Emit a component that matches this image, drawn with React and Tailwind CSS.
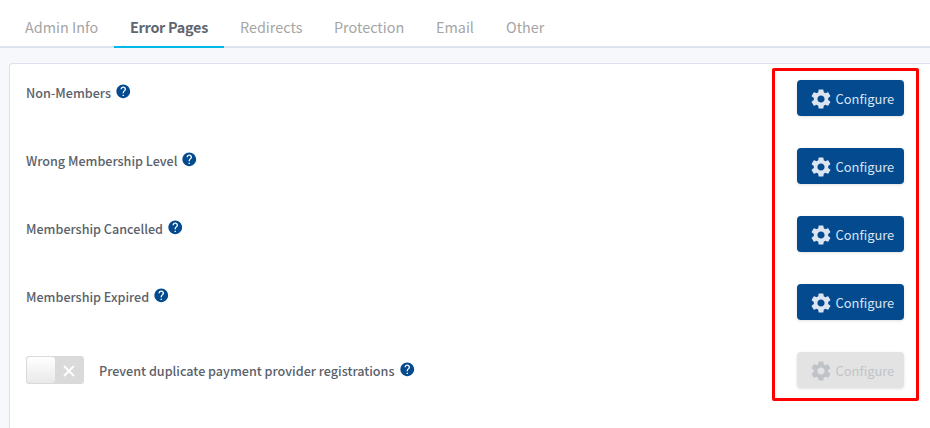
import { MdSettings, MdHelp } from 'react-icons/md'

const tabs = [
  { label: 'Admin Info', width: 'w-[105px]' },
  { label: 'Error Pages', width: 'w-[110px]', active: true },
  { label: 'Redirects', width: 'w-[94px]' },
  { label: 'Protection', width: 'w-[102px]' },
  { label: 'Email', width: 'w-[70px]' },
  { label: 'Other', width: 'w-[70px]' },
]

const rows = [
  { label: 'Non-Members' },
  { label: 'Wrong Membership Level' },
  { label: 'Membership Cancelled' },
  { label: 'Membership Expired' },
  { label: 'Prevent duplicate payment provider registrations', toggle: true, disabled: true },
]

function Toggle() {
  return (
    <div className="flex w-[58px] h-7 mr-[15px] p-px rounded-[3px] bg-[#dadada]">
      <div className="w-7 h-[26px] rounded-[3px] bg-linear-to-b from-white to-[#e9e9e9]" />
      <div className="flex-1 flex items-center justify-center text-white">
        <svg width="12" height="12" viewBox="0 0 12 12" className="-ml-px mt-0.5" fill="none" stroke="currentColor" strokeWidth="1.8">
          <path d="M1 1l10 10M11 1L1 11" />
        </svg>
      </div>
    </div>
  )
}

function ConfigureButton({ disabled }) {
  return (
    <button
      disabled={disabled}
      className={`flex items-center w-[107px] h-9 pl-[11.5px] rounded-[4px] text-[12.9px] shadow-[0_1px_3px_rgba(0,0,0,0.12)] whitespace-nowrap ${
        disabled ? 'bg-[#e3e3e3] text-[#bfc3c8]' : 'bg-[#044a8f] text-[#dbe4f0]'
      }`}
    >
      <MdSettings size={24} className="mt-0.5" />
      <span className="ml-[3px] mt-0.5">Configure</span>
    </button>
  )
}

function SettingRow({ label, toggle, disabled }) {
  return (
    <div className="flex items-start justify-between h-[68px]">
      <div className={`flex items-center ${toggle ? 'h-7 mt-1' : 'h-[25px]'}`}>
        {toggle && <Toggle />}
        <span className={`text-[12.6px] font-medium text-[#5a616b] leading-none whitespace-nowrap ${toggle ? 'mt-[3px]' : 'mt-0.5'}`}>
          {label}
        </span>
        <MdHelp size={16.5} className={`ml-1 text-[#044a8f] ${toggle ? '-mt-0.5' : '-mt-[3px]'}`} />
      </div>
      <ConfigureButton disabled={disabled} />
    </div>
  )
}

export default function App() {
  return (
    <div className="relative w-[930px] h-[428px] overflow-hidden flex flex-col bg-[#f7f8fb] font-['Noto_Sans_CJK_SC',sans-serif]">
      <nav className="flex h-12 shrink-0 pl-[9px] bg-white shadow-[inset_0_-2px_0_#dbe3f0]">
        {tabs.map((tab) => (
          <div
            key={tab.label}
            className={`${tab.width} h-12 pt-[17px] pl-4 border-b-2 text-[14.4px] leading-5 whitespace-nowrap ${
              tab.active ? 'border-[#00b9e6] font-bold tracking-[-0.28px] text-[#5f6670]' : 'border-transparent text-[#a5a5a5]'
            }`}
          >
            {tab.label}
          </div>
        ))}
      </nav>

      <main className="flex-1 mt-[15px] ml-[9px] pt-4 pl-4 pr-[26px] bg-white border-t border-l border-[#dbe1ee] rounded-tl-[4px]">
        {rows.map((row) => (
          <SettingRow key={row.label} {...row} />
        ))}
      </main>

      {/* Highlight around the configure buttons */}
      <div className="absolute left-[772px] top-[68px] w-[147px] h-[333px] border-3 border-[#ff0000] rounded-[2px] pointer-events-none" />
    </div>
  )
}
